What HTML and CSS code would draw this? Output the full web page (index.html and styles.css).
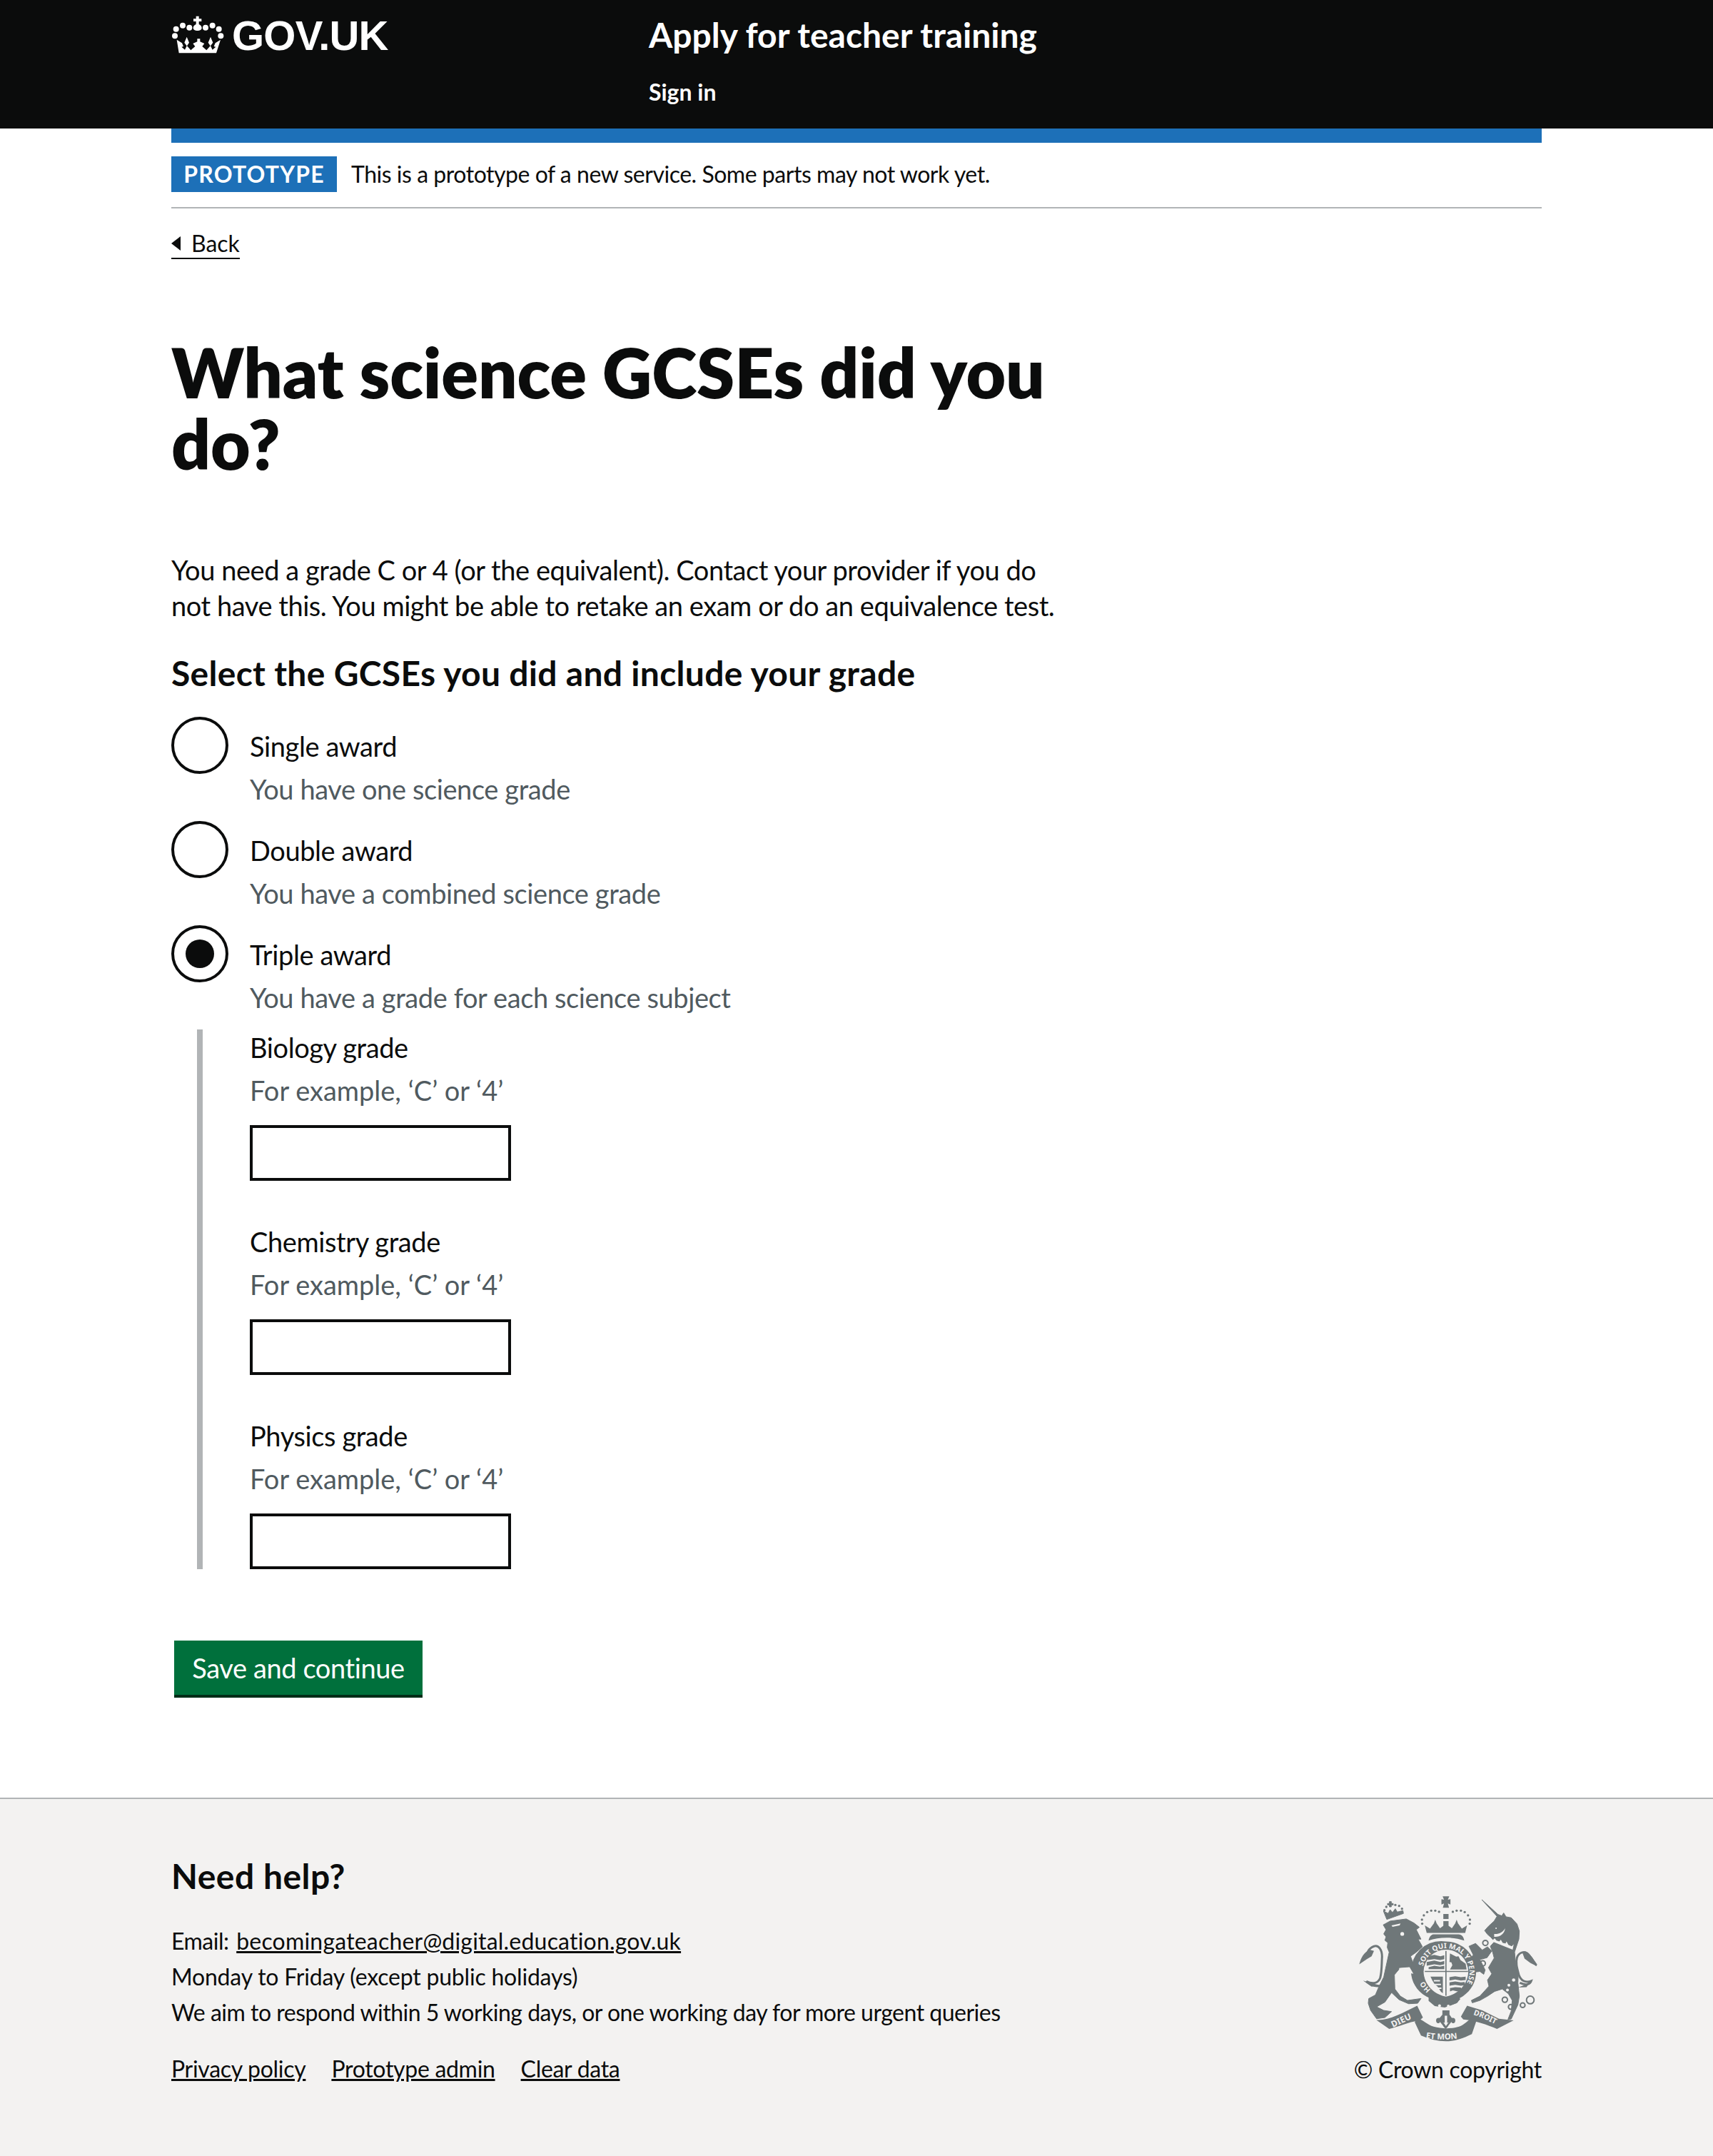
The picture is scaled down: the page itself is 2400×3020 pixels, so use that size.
FILE: index.html
```html
<!DOCTYPE html>
<html lang="en">

<head>
    <meta charset="UTF-8">
    <meta name="viewport" content="width=device-width, initial-scale=1.0">
    <title>What science GCSEs did you do?</title>
    <link rel="stylesheet" href="styles.css">
</head>

<body>
    <header class="site-header">
        <div class="container header-inner">
            <a class="logo" href="#">
                <svg class="logo-crown" viewBox="60 60 225 165" aria-hidden="true">
                    <g fill="#fff">
                        <circle cx="80" cy="119" r="12" />
                        <circle cx="108" cy="104" r="12" />
                        <circle cx="136" cy="113" r="12" />
                        <circle cx="204" cy="113" r="12" />
                        <circle cx="233" cy="104" r="12" />
                        <circle cx="260" cy="119" r="12" />
                        <circle cx="75" cy="148" r="12" />
                        <circle cx="268" cy="148" r="12" />
                        <path d="M164 65h12v11h11v11h-11v12c8 3 12 10 12 15 0 8-8 12-18 12s-18-4-18-12c0-5 4-12 12-15V87h-11V76h11z" />
                        <path d="M92 220h157l18-56-22 14-6 14 8 2-14 12-8-16 10-14-10-24-10 24 9 14-16 18-18-16 9-12-18-8v-12h-12v12l-18 8 9 12-18 16-16-18 9-14-10-24-10 24 10 14-8 16-14-12 8-2-6-14-22-14z" />
                    </g>
                </svg>
                <span class="logo-text">GOV.UK</span>
            </a>
            <div class="service">
                <a class="service-name" href="#">Apply for teacher training</a>
                <a class="service-nav" href="#">Sign in</a>
            </div>
        </div>
    </header>

    <div class="container">
        <div class="blue-bar"></div>
        <div class="phase-banner">
            <strong class="tag">Prototype</strong>
            <span>This is a prototype of a new service. Some parts may not work yet.</span>
        </div>
        <a class="back-link" href="#">Back</a>

        <main class="main">
            <h1>What science GCSEs did you do?</h1>
            <p class="intro">You need a grade C or 4 (or the equivalent). Contact your provider if you do not have this. You might be able to retake an exam or do an equivalence test.</p>

            <form>
                <h2>Select the GCSEs you did and include your grade</h2>

                <div class="radio">
                    <span class="radio-mark"></span>
                    <div class="radio-text">
                        <div class="label">Single award</div>
                        <div class="hint">You have one science grade</div>
                    </div>
                </div>
                <div class="radio">
                    <span class="radio-mark"></span>
                    <div class="radio-text">
                        <div class="label">Double award</div>
                        <div class="hint">You have a combined science grade</div>
                    </div>
                </div>
                <div class="radio">
                    <span class="radio-mark checked"></span>
                    <div class="radio-text">
                        <div class="label">Triple award</div>
                        <div class="hint">You have a grade for each science subject</div>
                    </div>
                </div>

                <div class="conditional">
                    <div class="field">
                        <div class="label">Biology grade</div>
                        <div class="hint">For example, ‘C’ or ‘4’</div>
                        <input class="text-input" type="text">
                    </div>
                    <div class="field">
                        <div class="label">Chemistry grade</div>
                        <div class="hint">For example, ‘C’ or ‘4’</div>
                        <input class="text-input" type="text">
                    </div>
                    <div class="field">
                        <div class="label">Physics grade</div>
                        <div class="hint">For example, ‘C’ or ‘4’</div>
                        <input class="text-input" type="text">
                    </div>
                </div>

                <button class="button" type="button">Save and continue</button>
            </form>
        </main>
    </div>

    <footer class="footer">
        <div class="container footer-inner">
            <div class="footer-left">
                <h2 class="footer-title">Need help?</h2>
                <p>Email: <a class="email-link" href="#">becomingateacher@digital.education.gov.uk</a></p>
                <p class="hours">Monday to Friday (except public holidays)</p>
                <p>We aim to respond within 5 working days, or one working day for more urgent queries</p>
                <div class="footer-links">
                    <a href="#">Privacy policy</a>
                    <a href="#">Prototype admin</a>
                    <a href="#">Clear data</a>
                </div>
            </div>
            <div class="footer-right">
                <svg class="arms" viewBox="120 100 770 625" aria-hidden="true">
                    <g fill="#6f7779" stroke="#6f7779" stroke-width="3" stroke-linejoin="round">
                        <!-- lion -->
                        <path d="M233 230L262 214 330 205 362 222 385 240 372 250 392 290 380 290 398 322 372 345 348 362 360 395 395 425 405 455 372 460 355 430 340 408 305 410 280 440 282 500 305 530 335 548 392 540 378 560 340 562 300 545 268 515 240 555 205 575 235 590 268 595 240 620 205 625 180 590 170 560 172 540 200 525 215 490 235 450 258 345 250 325 252 305 240 295 245 280 235 268 245 250Z" />
                        <path d="M248 207L234 172 254 182 262 166 272 178 284 162 292 176 316 170 318 182Z" />
                        <path d="M259 154v-8h-8v-6h8v-8h8v8h8v6h-8v8z" />
                        <!-- unicorn head and body -->
                        <path d="M648 124L716 186 732 192 740 180 750 196 772 200 796 226 806 256 804 290 786 344 790 392 802 432 800 474 806 530 800 566 772 626 758 628 772 592 776 548 760 520 734 500 702 510 672 530 640 548 608 558 604 548 640 530 660 508 678 488 672 462 690 436 676 410 700 370 694 346 684 320 702 300 686 282 672 270 660 254 676 236 700 214 712 194Z" />
                        <!-- unicorn forelegs -->
                        <path d="M594 320L622 308 650 336 672 322 690 340 670 368 640 376 662 420 656 438 640 426 622 428 600 372 612 356Z" />
                    </g>
                    <g fill="#6f7779">
                        <circle cx="238" cy="168" r="5" /><circle cx="246" cy="154" r="5" /><circle cx="284" cy="146" r="5" /><circle cx="300" cy="150" r="5" /><circle cx="312" cy="162" r="5" />
                        <!-- crown -->
                        <path d="M416 264L408 232 430 246 446 224 452 208 458 224 472 244 486 234 486 214 508 214 508 234 522 244 536 224 542 208 548 224 564 246 586 232 578 264Z" />
                        <path d="M486 205V184H508V205ZM483 110H511L505 124 516 122V144L505 140 510 158H484L489 140 478 144V122L489 124Z" />
                        <path d="M424 296c2-14 10-24 20-26h106c14 0 22 12 24 26-22-8-46-12-74-12s-54 4-76 12z" />
                        <circle cx="397" cy="225" r="5" /><circle cx="396" cy="208" r="5" /><circle cx="404" cy="190" r="5" /><circle cx="418" cy="176" r="5" /><circle cx="435" cy="170" r="5" /><circle cx="452" cy="170" r="5" /><circle cx="468" cy="175" r="5" />
                        <circle cx="526" cy="175" r="5" /><circle cx="542" cy="170" r="5" /><circle cx="560" cy="170" r="5" /><circle cx="576" cy="176" r="5" /><circle cx="590" cy="190" r="5" /><circle cx="598" cy="208" r="5" /><circle cx="597" cy="225" r="5" />
                        <!-- garter -->
                        <path fill-rule="evenodd" d="M497 300a127 127 0 0 1 127 127c0 50-28 90-70 112l-8 18-40 16-50-4-26-30c-46-18-80-64-80-114a127 127 0 0 1 127-127zM497 334a94 94 0 0 0-94 92c0 50 40 96 94 106 54-10 94-56 94-106a94 94 0 0 0-94-92z" />
                        <!-- shield quarters -->
                        <path d="M420 362l28-6 26 6 16-4v16l-18 4-24-4-28 4zM416 386l32-6 26 6 16-4v14l-18 4-24-4-32 6zM424 408l24-6 24 4 18-4v14H424zM514 350l26 14 10-2 8 16 22 16 4 24h-70l10-18-4-12-8-2zM432 448h52v70l-8-6-14-22-12-10-10-16zM512 450l24-4 24 4 20-2v14l-20 2-24-4-24 4zM512 472l24-4 24 4 16-2v14l-16 2-24-4-24 4zM514 496l22-4 24 2 2 14-16 2-20-4-12 4z" />
                        <!-- buckle end -->
                        <path d="M424 528l30 22 42 6 50-22 12 8-16 18-50 18-42-6-26-22z" />
                        <!-- ribbons -->
                        <path d="M204 630c50 4 112-30 172-60l24 50-14 12c-50 8-90 28-128 36z" />
                        <path d="M586 570L650 590 720 625 782 632 712 668C670 650 620 632 570 628L560 616Z" />
                        <path d="M372 618C400 630 420 650 445 658 480 668 520 668 552 658 575 650 590 630 612 618L626 632 606 690C560 712 530 720 497 720 460 720 430 712 392 696L366 640Z" />
                        <path d="M482 590h30v18l10 14c12-2 16 6 14 14-2 10-16 10-16 2-6 8-12 14-16 22l-8 8-8-8c-4-8-10-14-16-22 0 8-14 8-16-2-2-8 2-16 14-14l12-14z" />
                    </g>
                    <!-- lion face, collar and unicorn marks cut in background colour -->
                    <g fill="#f3f2f1">
                        <path d="M268 232L306 224 302 232 272 238ZM700 268c18 2 36-6 46-24-2 24-22 38-46 36z" />
                        <circle cx="313" cy="268" r="8" /><circle cx="708" cy="244" r="3" />
                        <path d="M300 412L344 408 360 436 340 432 318 440 304 460Z" />
                        <circle cx="782" cy="462" r="7" /><circle cx="762" cy="484" r="6" /><circle cx="756" cy="504" r="6" /><circle cx="470" cy="570" r="6" /><circle cx="507" cy="572" r="6" />
                        <path d="M692 296l10-10 8 10 12 4 6-8 8 14 12 2 4-8 8 14 14 6 8-8-4 22-86-34zM486 640l11 16 11-16-6 2V612h-10v30z" />
                        <path d="M446 462l26 0 0 6-26 0zM448 478l28 0 0 6-24 0zM456 494l22 0 0 6-16 0z" />
                    </g>
                    <g fill="none" stroke="#6f7779" stroke-width="6">
                        <circle cx="663" cy="306" r="11" /><circle cx="652" cy="392" r="11" /><circle cx="786" cy="416" r="11" /><circle cx="745" cy="545" r="11" /><circle cx="770" cy="575" r="10" /><circle cx="820" cy="568" r="10" /><circle cx="852" cy="546" r="16" />
                        <!-- tails -->
                        <path stroke-width="9" d="M222 486c-24 6-44-4-60-18 30 14 50 6 58-14 8-30 6-60 8-90 0-30-14-50-34-44-24 8-30 30-36 52" />
                        <path stroke-width="9" d="M808 474c30 14 44 4 48-8-24 10-44-2-52-26-8-30-14-50-8-72 8-24 34-30 48-14 12 14 22 30 34 46" />
                        <!-- shield lines -->
                        <path stroke-width="5" d="M497 340V528M408 426H590" />
                    </g>
                    <g fill="#6f7779">
                        <path d="M132 396c6-26 20-52 44-62l18 6-10 22-20 12zM880 404c-10-24-24-50-48-62l-12 8 8 22 24 18zM148 464l36 26 34-6-30-8zM856 466l-20 26-36 2 30-12z" />
                    </g>
                    <defs>
                        <path id="garter-path" d="M433 503A99 99 0 1 1 561 503" />
                        <path id="dieu-path" d="M274 662c30-14 62-32 96-42" />
                        <path id="etmon-path" d="M412 706C470 716 530 714 584 700" />
                        <path id="droit-path" d="M612 608C650 620 690 640 730 662" />
                    </defs>
                    <g class="arms-text">
                        <text font-size="30"><textPath href="#garter-path">HO&#160;&#160;&#160;&#160;&#160;&#160;&#160;&#160;SOIT QUI MAL Y PENSE</textPath></text>
                        <text font-size="36"><textPath href="#dieu-path">DIEU</textPath></text>
                        <text font-size="34"><textPath href="#etmon-path">ET MON</textPath></text>
                        <text font-size="32"><textPath href="#droit-path">DROIT</textPath></text>
                    </g>
                </svg>
                <div class="copyright">© Crown copyright</div>
            </div>
        </div>
    </footer>
</body>

</html>
```

FILE: styles.css
```css
* {
    box-sizing: border-box;
}

body {
    font-family: Lato, "Noto Sans", Arial, sans-serif;
    font-size: 38px;
    line-height: 50px;
    letter-spacing: -0.4px;
    color: #0b0c0c;
    background-color: #fff;
    margin: 0;
}

a {
    color: #0b0c0c;
}

p {
    margin: 0;
}

.container {
    width: 1920px;
    margin: 0 auto;
}

/* header */
.site-header {
    background-color: #0b0c0c;
    height: 180px;
}

.header-inner {
    display: flex;
}

.logo {
    width: 669px;
    display: flex;
    align-items: flex-start;
    padding-top: 20px;
    color: #fff;
    text-decoration: none;
}

.logo-crown {
    width: 75px;
    height: 55px;
    margin-top: 1px;
}

.logo-text {
    font-family: "Liberation Sans", Arial, sans-serif;
    font-size: 58px;
    line-height: 60px;
    font-weight: 700;
    letter-spacing: -0.8px;
    margin-left: 10px;
}

.service {
    display: flex;
    flex-direction: column;
    align-items: flex-start;
}

.service-name {
    font-size: 48px;
    line-height: 60px;
    font-weight: 700;
    letter-spacing: 0;
    color: #fff;
    text-decoration: none;
    margin-top: 19px;
}

.service-nav {
    font-size: 32px;
    line-height: 40px;
    font-weight: 700;
    letter-spacing: 0;
    color: #fff;
    text-decoration: none;
    margin-top: 30px;
}

/* phase banner */
.blue-bar {
    height: 20px;
    background-color: #1d70b8;
}

.phase-banner {
    display: flex;
    align-items: center;
    gap: 20px;
    height: 92px;
    padding-bottom: 2px;
    border-bottom: 2px solid #b1b4b6;
    font-size: 32px;
    letter-spacing: -0.47px;
}

.tag {
    width: 232px;
    height: 50px;
    background-color: #1d70b8;
    color: #fff;
    font-size: 32px;
    line-height: 50px;
    text-align: center;
    text-transform: uppercase;
    letter-spacing: 1.2px;
}

.back-link {
    display: inline-block;
    position: relative;
    margin-top: 29px;
    padding-left: 28px;
    font-size: 32px;
    line-height: 40px;
    letter-spacing: 0;
    text-decoration: none;
    border-bottom: 2px solid #0b0c0c;
}

.back-link::before {
    content: "";
    position: absolute;
    left: 0;
    top: 10px;
    border-top: 10px solid transparent;
    border-bottom: 10px solid transparent;
    border-right: 13px solid #0b0c0c;
}

/* main */
.main {
    width: 1280px;
    padding-top: 108px;
    padding-bottom: 140px;
}

h1 {
    font-size: 96px;
    line-height: 100px;
    font-weight: 800;
    letter-spacing: -0.1px;
    margin: 0 0 102px;
}

.intro {
    max-width: 1250px;
    margin-bottom: 40px;
    letter-spacing: -0.45px;
}

h2 {
    font-size: 48px;
    line-height: 60px;
    font-weight: 700;
    letter-spacing: 0.3px;
    margin: 0 0 31px;
}

.radio {
    display: flex;
    height: 126px;
    margin-bottom: 20px;
}

.radio-mark {
    flex: none;
    width: 80px;
    height: 80px;
    border: 4px solid #0b0c0c;
    border-radius: 50%;
    position: relative;
}

.radio-mark.checked::after {
    content: "";
    position: absolute;
    left: 16px;
    top: 16px;
    width: 40px;
    height: 40px;
    border-radius: 50%;
    background-color: #0b0c0c;
}

.radio-text {
    margin-left: 30px;
    padding-top: 16px;
}

.label {
    margin-bottom: 10px;
}

.hint {
    color: #505a5f;
    margin-bottom: 0;
}

.conditional {
    margin-left: 36px;
    padding-left: 66px;
    border-left: 8px solid #b1b4b6;
}

.field {
    margin-bottom: 60px;
}

.field:last-child {
    margin-bottom: 0;
}

.field .hint {
    letter-spacing: 0;
}

.text-input {
    display: block;
    width: 366px;
    height: 78px;
    margin-top: 24px;
    border: 4px solid #0b0c0c;
    border-radius: 0;
    background-color: #fff;
}

.button {
    display: block;
    width: 348px;
    height: 80px;
    margin: 100px 0 0 4px;
    padding: 0;
    border: 0;
    border-bottom: 4px solid #002d18;
    border-radius: 0;
    background-color: #00703c;
    color: #fff;
    font-family: inherit;
    font-size: 38px;
    line-height: 50px;
    letter-spacing: -0.4px;
}

/* footer */
.footer {
    background-color: #f3f2f1;
    border-top: 2px solid #b1b4b6;
    height: 502px;
    font-size: 32px;
    letter-spacing: -0.5px;
}

.footer-inner {
    display: flex;
    justify-content: space-between;
}

.footer-left {
    padding-top: 78px;
}

.footer-title {
    letter-spacing: 0.5px;
    margin: 0 0 36px;
}

.email-link {
    letter-spacing: 0.2px;
    margin-left: 3px;
}

.hours {
    letter-spacing: -0.2px;
}

.footer-links {
    display: flex;
    gap: 36px;
    margin-top: 29px;
    letter-spacing: -0.3px;
}

.footer-right {
    display: flex;
    flex-direction: column;
    align-items: flex-end;
    padding-top: 133px;
}

.arms {
    width: 257px;
    height: 208px;
    margin-right: 3px;
}

.arms-text {
    fill: #f3f2f1;
    font-family: "Noto Sans", Arial, sans-serif;
    font-weight: 700;
    letter-spacing: 0;
}

.copyright {
    margin-top: 13px;
    letter-spacing: -0.3px;
}
```
